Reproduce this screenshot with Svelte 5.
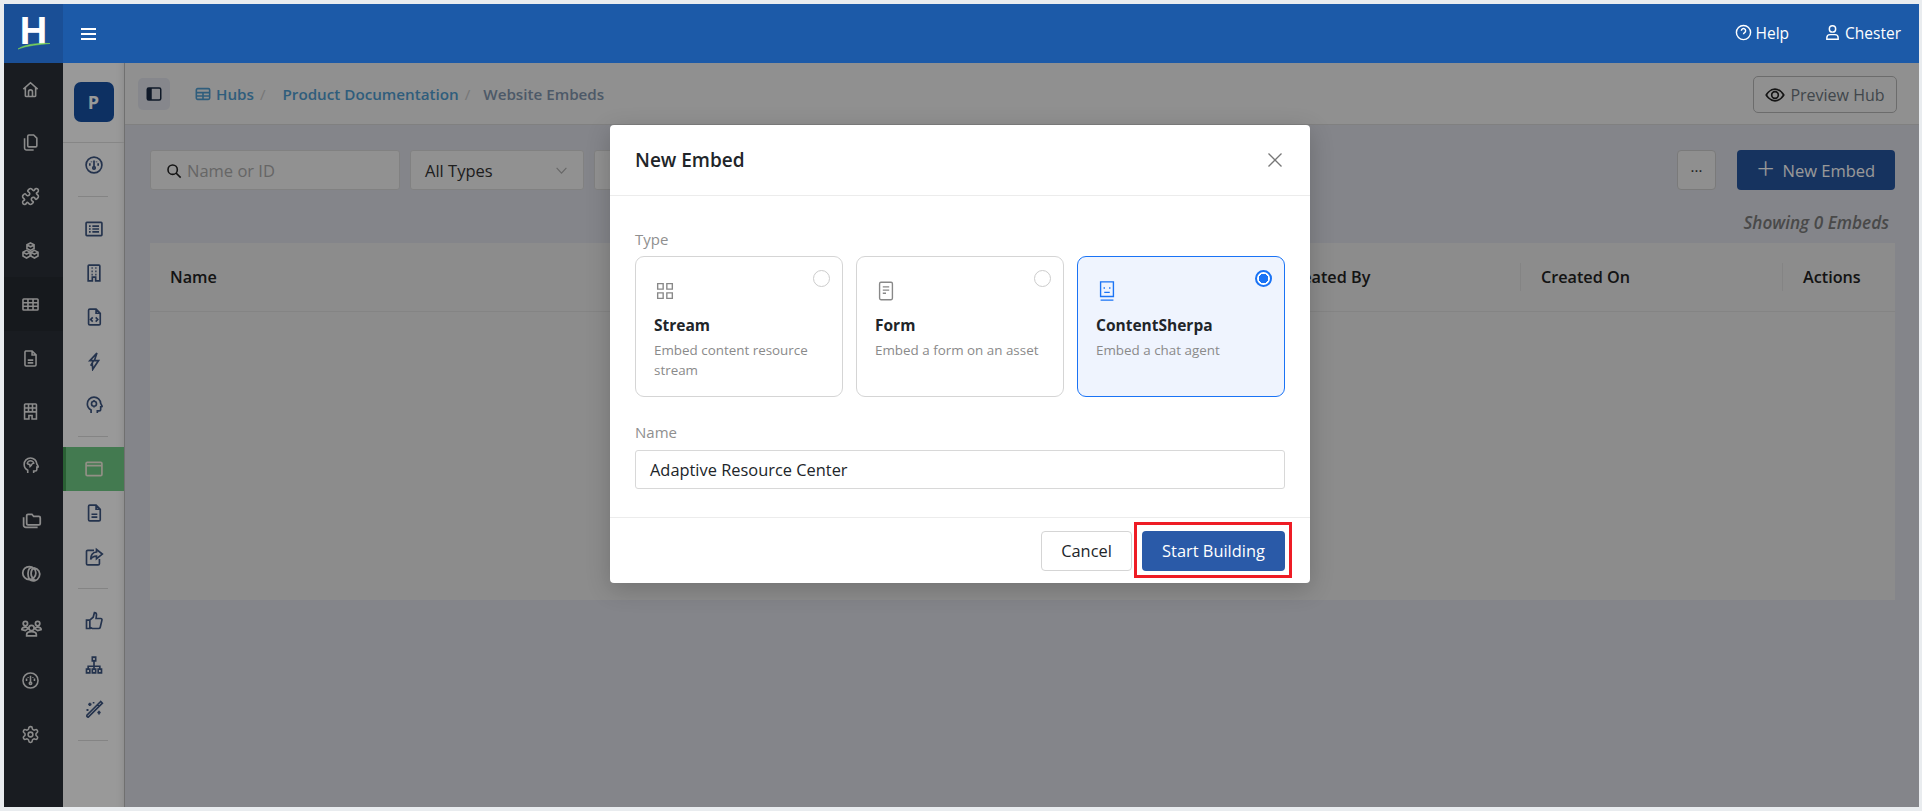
<script>
  const railIcons = [
    { d: 'M3 11.5 12 3.5l9 8M5.5 9.5V20a.8.8 0 0 0 .8.8h11.4a.8.8 0 0 0 .8-.8V9.5M9.5 20.8V15a2.5 2.5 0 0 1 5 0v5.8' },
    { d: 'M10 2.5h6l4 4V16a1.5 1.5 0 0 1-1.5 1.5H10A1.5 1.5 0 0 1 8.5 16V4A1.5 1.5 0 0 1 10 2.500zM4.500 6.500V19A2.500 2.500 0 0 0 7 21.500h9' },
    { d: 'M19.439 7.85c-.049.322.059.648.289.878l1.568 1.568c.47.47.706 1.087.706 1.704s-.235 1.233-.706 1.704l-1.611 1.611a.98.98 0 0 1-.837.276c-.47-.07-.802-.48-.968-.925a2.501 2.501 0 1 0-3.214 3.214c.446.166.855.497.925.968a.979.979 0 0 1-.276.837l-1.61 1.61a2.404 2.404 0 0 1-1.705.707 2.402 2.402 0 0 1-1.704-.706l-1.568-1.568a1.026 1.026 0 0 0-.877-.29c-.493.074-.84.504-1.02.968a2.5 2.5 0 1 1-3.237-3.237c.464-.18.894-.527.967-1.02a1.026 1.026 0 0 0-.289-.877l-1.568-1.568A2.402 2.402 0 0 1 1.998 12c0-.617.236-1.234.706-1.704L4.23 8.77c.24-.24.581-.353.917-.303.515.077.877.528 1.073 1.01a2.5 2.5 0 1 0 3.259-3.259c-.482-.196-.933-.558-1.01-1.073-.05-.336.062-.676.303-.917l1.525-1.525A2.402 2.402 0 0 1 12 1.998c.617 0 1.234.236 1.704.706l1.568 1.568c.23.23.556.338.877.29.493-.074.84-.504 1.02-.968a2.5 2.5 0 1 1 3.237 3.237c-.464.18-.894.527-.967 1.02Z' },
    { d: 'M12 2.500l4.500 2.300v4.700L12 11.800 7.500 9.500V4.800zM7 11.800l4.500 2.300v4.900L7 21.500l-4.500-2.500v-4.900zM17 11.800l4.500 2.300v4.900L17 21.500l-4.500-2.500v-4.900zM7.500 5l4.500 2.300L16.500 5M2.500 14.300 7 16.600l4.500-2.300M12.500 14.300l4.500 2.300 4.500-2.300' },
    { d: 'M3.500 5h17a1 1 0 0 1 1 1v12a1 1 0 0 1-1 1h-17a1 1 0 0 1-1-1V6a1 1 0 0 1 1-1zM2.500 9.700h19M2.500 14.300h19M8.800 5v14M15.200 5v14', active: true },
    { d: 'M6 2.500h8l5 5V20a1.500 1.500 0 0 1-1.500 1.500h-11A1.500 1.500 0 0 1 5 20V4a1.500 1.500 0 0 1 1-1.500zM14 2.500V7.500h5M8.500 14h7M8.500 17.500h7' },
    { d: 'M5.500 2.500h13a1 1 0 0 1 1 1v18h-5.500v-4.500h-4v4.500H4.500v-18a1 1 0 0 1 1-1zM4.500 7.500h15M4.500 12.500h15M9.500 2.500v10M14.500 2.500v10' },
    { d: 'M8.500 21.500V18c-2.600-1.500-4.500-4-4.500-7.300A8 8 0 0 1 12 2.500a8 8 0 0 1 8 7.500l1.700 3.200c.2.500-.1.900-.7.900h-1V17a2 2 0 0 1-2 2h-2v2.500M8 9.500c0-2 2-3.500 4-3.500s4 1.500 4 3.200c-2 0-2.500 1-3 2.500l-1.500 1.500-.5-2.500c-1 0-2.500-.5-3-1.200z' },
    { d: 'M8 6h4.500l2 2.500h6a1.500 1.500 0 0 1 1.500 1.500v6.500a1.500 1.500 0 0 1-1.500 1.500H8a1.500 1.500 0 0 1-1.500-1.500v-9A1.500 1.500 0 0 1 8 6zM3 9.500v9A2.500 2.500 0 0 0 5.500 21H19', wide: true },
    { d: 'M9.500 19a7.500 7.500 0 1 1 0-15 7.500 7.500 0 0 1 0 15zM15 5.500a7.500 7.500 0 1 1-5.500 13.500M14.500 5.800c-4 2.800-4 9.600 0 12.600-4.800 2-6.500-1-6.500-6.300s2-8 6.500-6.300z', wide: true },
    { d: 'M12 9.500a3 3 0 1 1 0 6 3 3 0 0 1 0-6zM6.500 20c0-2.500 2.500-3.300 5.500-3.300s5.500.8 5.500 3.300v1.500h-11zM5 5a2.500 2.500 0 1 1 0 5 2.500 2.500 0 0 1 0-5zM19 5a2.500 2.500 0 1 1 0 5 2.500 2.500 0 0 1 0-5zM1 14.500c0-2 2-3 4-3 1.500 0 2.500.5 3 1.500-.5 1-1 1.500-3 2.500zM23 14.500c0-2-2-3-4-3-1.500 0-2.500.5-3 1.500.5 1 1 1.500 3 2.500z', wide: true },
    { d: 'M12 2.500a9.500 9.500 0 1 1 0 19 9.500 9.500 0 0 1 0-19zM12 6v8M7 9.500v3M17 9.500v3M9 7.500v1M15 7.500v1M12 14a1.500 1.500 0 1 1 0 3 1.500 1.500 0 0 1 0-3z' },
    { d: 'M12.22 2h-.44a2 2 0 0 0-2 2v.18a2 2 0 0 1-1 1.73l-.43.25a2 2 0 0 1-2 0l-.15-.08a2 2 0 0 0-2.73.73l-.22.38a2 2 0 0 0 .73 2.73l.15.1a2 2 0 0 1 1 1.72v.51a2 2 0 0 1-1 1.74l-.15.09a2 2 0 0 0-.73 2.73l.22.38a2 2 0 0 0 2.73.73l.15-.08a2 2 0 0 1 2 0l.43.25a2 2 0 0 1 1 1.73V20a2 2 0 0 0 2 2h.44a2 2 0 0 0 2-2v-.18a2 2 0 0 1 1-1.73l.43-.25a2 2 0 0 1 2 0l.15.08a2 2 0 0 0 2.73-.73l.22-.39a2 2 0 0 0-.73-2.73l-.15-.08a2 2 0 0 1-1-1.74v-.5a2 2 0 0 1 1-1.74l.15-.09a2 2 0 0 0 .73-2.73l-.22-.38a2 2 0 0 0-2.73-.73l-.15.08a2 2 0 0 1-2 0l-.43-.25a2 2 0 0 1-1-1.73V4a2 2 0 0 0-2-2zM12 9a3 3 0 1 1 0 6 3 3 0 0 1 0-6z' }
  ]

  const hubGroups = [
    [{ d: 'M12 2.500a9.500 9.500 0 1 1 0 19 9.500 9.500 0 0 1 0-19zM12 6.500v7M7 10v3M17 10v3M9 7.800v1M15 7.800v1M12 14a1.500 1.500 0 1 1 0 3 1.500 1.500 0 0 1 0-3z' }],
    [
      { d: 'M3.500 4h17a1 1 0 0 1 1 1v14a1 1 0 0 1-1 1h-17a1 1 0 0 1-1-1V5a1 1 0 0 1 1-1zM6 8.500h2M10 8.500h8M6 12h2M10 12h8M6 15.500h2M10 15.500h8' },
      { d: 'M6 2.500h12a1 1 0 0 1 1 1v18h-5v-4.500h-4v4.500H5v-18a1 1 0 0 1 1-1zM9 6h1.500M13.500 6H15M9 10h1.500M13.500 10H15M9 14h1.500M13.500 14H15' },
      { d: 'M7 2.500h7.500l5 5V20a1.500 1.500 0 0 1-1.500 1.500H7A1.500 1.500 0 0 1 5.500 20V4A1.500 1.500 0 0 1 7 2.500zM14.500 2.500v5h5M10.500 12.500 8 15l2.500 2.500M14 12.500l2.500 2.500-2.500 2.500' },
      { d: 'M15.500 2.500 7 11.500h4.500L8 17.500l2-2 .5 6.500 7-10.500h-5l3-9z' },
      { d: 'M8.500 21.500V18C6 16.500 4 14 4 10.700A8 8 0 0 1 12 2.500a8 8 0 0 1 8 7.500l1.700 3.200c.2.500-.1.900-.7.900h-1V17a2 2 0 0 1-2 2h-2v2.500M12 7.500a3 3 0 1 1 0 6 3 3 0 0 1 0-6zM12 6v1.500M12 13.500V15M8.500 10.500H10M14 10.500h1.500' }
    ],
    [
      { d: 'M4 4h16a1.500 1.500 0 0 1 1.500 1.500v13A1.500 1.500 0 0 1 20 20H4a1.500 1.500 0 0 1-1.500-1.500v-13A1.500 1.500 0 0 1 4 4zM2.500 8h19', active: true },
      { d: 'M7 2.500h7.500l5 5V20a1.500 1.500 0 0 1-1.500 1.500H7A1.500 1.500 0 0 1 5.500 20V4A1.500 1.500 0 0 1 7 2.500zM14.500 2.500v5h5M9 13.500h7M9 17h7' },
      { d: 'M12 4H4.500A1.500 1.500 0 0 0 3 5.500V20a1.500 1.500 0 0 0 1.500 1.500H17a1.500 1.500 0 0 0 1.500-1.500v-5.500M15 3l7 5.500-7 5.500v-3c-3.500 0-5.500 1-7 4 0-5 2-8.500 7-9z' }
    ],
    [
      { d: 'M7 11v10H3V11zM7 11l4-3.500 1.500-5.500c1.500 0 2.500 1 2.500 2.500L14.500 9H20a1.500 1.500 0 0 1 1.500 2l-2 8.500A2 2 0 0 1 17.500 21H10l-3-1.500' },
      { d: 'M10 2.500h4v4.500h-4zM3 17h4v4.500H3zM10 17h4v4.500h-4zM17 17h4v4.500h-4zM12 7v10M5 17v-3.500h14V17' },
      { d: 'M20 3 3.500 19.500a1.500 1.500 0 0 0 2 2L22 5zM16.500 6.500l2 2M7 4.500v4M5 6.500h4M4 12v2.500M3 13.200h2.500M18 14v4.500M16 16.200h4M11.500 3.500v2M10.500 4.500h2' }
    ]
  ]

  const cols = ['Name', 'Created By', 'Created On', 'Actions']

  const embedTypes = [
    { title: 'Stream', desc: 'Embed content resource stream', d: 'M4 4h6v6H4zM14 4h6v6h-6zM4 14h6v6H4zM14 14h6v6h-6z' },
    { title: 'Form', desc: 'Embed a form on an asset', d: 'M6.500 2.500h11a1.500 1.500 0 0 1 1.500 1.500v16a1.500 1.500 0 0 1-1.500 1.500h-11A1.500 1.500 0 0 1 5 20V4a1.500 1.500 0 0 1 1.500-1.500zM8.500 7.500h7M8.500 11h7M8.500 14.500h3.500' },
    { title: 'ContentSherpa', desc: 'Embed a chat agent', d: 'M5 2h14v16H5zM5 22h14M9 8v1.500M15 8v1.500M9 13.500h6', selected: true }
  ]
</script>

<div class="frame">
  <header class="topbar">
    <div class="logo">
      <span class="logo-h">H</span>
      <svg class="swoosh" viewBox="0 0 34 8"><path d="M1 7C8 2 22 1 33 1.500 22 2.500 10 3.500 1 7z" fill="#7ed957" stroke="#7ed957" stroke-width=".6"/></svg>
    </div>
    <button class="burger" aria-label="Menu"><span></span><span></span><span></span></button>
    <div class="top-links">
      <span class="top-link">
        <svg viewBox="0 0 24 24" class="top-icon"><circle cx="12" cy="12" r="10"/><path d="M9 9.500a3 3 0 1 1 4.500 2.600c-1 .6-1.500 1.100-1.500 2.200M12 17.500v.3"/></svg>
        Help
      </span>
      <span class="top-link">
        <svg viewBox="0 0 24 24" class="top-icon"><circle cx="12" cy="7" r="4.500"/><path d="M4 21.500v-2c0-2.500 2-4.500 4.500-4.500h7c2.500 0 4.500 2 4.500 4.500v2z"/></svg>
        Chester
      </span>
    </div>
  </header>

  <div class="below">
    <nav class="rail">
      {#each railIcons as icon}
        <div class="rail-item" class:active={icon.active}>
          <svg viewBox="0 0 24 24" class="rail-icon" class:wide={icon.wide}><path d={icon.d}/></svg>
        </div>
      {/each}
    </nav>

    <aside class="hubnav">
      <div class="hub-top"><span class="hub-badge">P</span></div>
      {#each hubGroups as group}
        {#each group as item}
          <div class="hub-item" class:active={item.active}>
            <svg viewBox="0 0 24 24" class="hub-icon"><path d={item.d}/></svg>
          </div>
        {/each}
        <div class="hub-divider"></div>
      {/each}
    </aside>

    <main class="content">
      <div class="crumbbar">
        <button class="panel-toggle" aria-label="Toggle panel">
          <svg viewBox="0 0 24 24"><rect x="3" y="4" width="18" height="16" rx="2" fill="none" stroke="#1a2a44" stroke-width="2"/><path d="M3 6a2 2 0 0 1 2-2h4v16H5a2 2 0 0 1-2-2z" fill="#1a2a44"/></svg>
        </button>
        <svg viewBox="0 0 24 24" class="crumb-icon"><rect x="2" y="4" width="20" height="16" rx="2"/><path d="M2 10h20M2 15h20M12 10v10"/></svg>
        <a class="crumb first" href="#hubs">Hubs</a>
        <span class="slash">/</span>
        <a class="crumb second" href="#doc">Product Documentation</a>
        <span class="slash">/</span>
        <span class="crumb current">Website Embeds</span>
        <button class="preview">
          <svg viewBox="0 0 24 24"><path d="M1.500 12S5.500 5 12 5s10.500 7 10.500 7-4 7-10.500 7S1.500 12 1.500 12z"/><circle cx="12" cy="12" r="4"/></svg>
          Preview Hub
        </button>
      </div>

      <div class="filters">
        <div class="search">
          <svg viewBox="0 0 24 24"><circle cx="10" cy="10" r="7"/><path d="m15 15 7 7"/></svg>
          <span>Name or ID</span>
        </div>
        <div class="select types">All Types <svg viewBox="0 0 24 24"><path d="m3 7 9 10 9-10"/></svg></div>
        <div class="select other"></div>
        <button class="more">···</button>
        <button class="new-btn"><span class="plus">+</span> New Embed</button>
      </div>

      <p class="showing">Showing 0 Embeds</p>

      <section class="table">
        <div class="thead">
          {#each cols as col, i}
            <div class="th" class:divided={i > 0}>{col}</div>
          {/each}
        </div>
      </section>
    </main>

    <div class="backdrop">
      <div class="modal">
        <div class="modal-head">
          <h2>New Embed</h2>
          <svg viewBox="0 0 16 16" class="close"><path d="M1.500 1.500l13 13M14.500 1.500l-13 13"/></svg>
        </div>
        <div class="modal-body">
          <div class="field-label">Type</div>
          <div class="type-grid">
            {#each embedTypes as t}
              <div class="type-card" class:selected={t.selected}>
                <span class="radio"></span>
                <svg viewBox="0 0 24 24" class="type-icon"><path d={t.d}/></svg>
                <div class="type-title">{t.title}</div>
                <div class="type-desc">{t.desc}</div>
              </div>
            {/each}
          </div>
          <div class="field-label name-label">Name</div>
          <div class="name-input">Adaptive Resource Center</div>
        </div>
        <div class="modal-foot">
          <button class="cancel">Cancel</button>
          <div class="start-wrap">
            <button class="start">Start Building</button>
            <span class="callout"></span>
          </div>
        </div>
      </div>
    </div>
  </div>
</div>

<style>
  :global(body) {
    background: #e9ecef;
    font-family: "Open Sans", "Noto Sans", sans-serif;
  }

  .frame {
    height: 811px;
    box-sizing: border-box;
    padding: 4px 3px 4px 4px;
    display: flex;
    flex-direction: column;
    overflow: hidden;
  }

  button {
    font-family: inherit;
    cursor: pointer;
  }

  .topbar {
    height: 59px;
    flex: none;
    background: #1c5aa8;
    display: flex;
    align-items: center;
    color: #fff;
  }

  .logo {
    width: 59px;
    height: 59px;
    background: #1a4f96;
    position: relative;
    display: flex;
    justify-content: center;
  }

  .logo-h {
    font: 700 38px/1 "Liberation Sans", sans-serif;
    margin-top: 8px;
  }

  .swoosh {
    position: absolute;
    left: 13px;
    top: 38px;
    width: 34px;
    height: 8px;
  }

  .burger {
    background: none;
    border: 0;
    margin-left: 18px;
    padding: 0;
    display: flex;
    flex-direction: column;
    gap: 3px;
    width: 15px;
  }

  .burger span {
    display: block;
    height: 2px;
    background: #fff;
  }

  .top-links {
    margin-left: auto;
    display: flex;
    gap: 35px;
    padding-right: 18px;
    margin-top: -2px;
  }

  .top-link {
    display: flex;
    align-items: center;
    gap: 4px;
    font-size: 15.500px;
  }

  .top-icon {
    width: 17px;
    height: 17px;
    fill: none;
    stroke: #fff;
    stroke-width: 2;
  }

  .below {
    flex: 1;
    display: flex;
    position: relative;
    min-height: 0;
  }

  .rail {
    width: 59px;
    flex: none;
    background: #2a2f37;
  }

  .rail-item {
    height: 53.800px;
    display: flex;
    align-items: center;
    padding-left: 17px;
  }

  .rail-item:first-child {
    height: 53px;
  }

  .rail-item.active {
    background: #262a31;
  }

  .rail-icon {
    width: 19px;
    height: 19px;
    fill: none;
    stroke: #e8e8e8;
    stroke-width: 2;
  }

  .rail-icon.wide {
    width: 21px;
    height: 21px;
  }

  .hubnav {
    width: 61px;
    flex: none;
    background: #fff;
    border-right: 1px solid #bbb;
    box-shadow: inset -8px 0 8px -8px rgba(0, 0, 0, .12);
  }

  .hub-top {
    height: 80px;
    box-sizing: border-box;
    padding-bottom: 2px;
    border-bottom: 1px solid #e0e0e0;
    display: flex;
    align-items: center;
    justify-content: center;
  }

  .hub-badge {
    width: 40px;
    height: 40px;
    border-radius: 7px;
    background: #1750a3;
    color: #fff;
    font-weight: 700;
    font-size: 18px;
    display: flex;
    align-items: center;
    justify-content: center;
  }

  .hub-item {
    height: 44px;
    display: flex;
    align-items: center;
    justify-content: center;
  }

  .hub-item.active {
    background: #71cb85;
    box-shadow: inset 3px 0 0 #46a058;
  }

  .hub-icon {
    width: 20px;
    height: 20px;
    fill: none;
    stroke: #3d5580;
    stroke-width: 2;
  }

  .hub-item.active .hub-icon {
    stroke: #f5f0e0;
  }

  .hub-divider {
    height: 1px;
    background: #ddd;
    margin: 9px 16px 10px 15px;
  }

  .content {
    flex: 1;
    min-width: 0;
    background: #dcdee6;
    display: flex;
    flex-direction: column;
  }

  .crumbbar {
    height: 60px;
    flex: none;
    padding: 1px 22px 0 13px;
    background: #f0f0f0;
    border-bottom: 1px solid #d5d5d5;
    display: flex;
    align-items: center;
    font-size: 15.200px;
    font-weight: 600;
  }

  .panel-toggle {
    width: 32px;
    height: 32px;
    border: 0;
    border-radius: 5px;
    background: #dfe2ea;
    padding: 7px;
    margin-right: 25px;
    display: flex;
  }

  .panel-toggle svg {
    width: 18px;
    height: 18px;
  }

  .crumb-icon {
    width: 16px;
    height: 16px;
    fill: none;
    stroke: #4f9ccf;
    stroke-width: 2.400;
    margin-right: 5px;
  }

  .crumb {
    text-decoration: none;
  }

  .first,
  .second {
    color: #4f9ccf;
  }

  .current {
    color: #8095ad;
    margin-left: 2px;
  }

  .slash {
    color: #c6c6c6;
    font-weight: 400;
    margin: 0 11px 0 6px;
  }

  .second {
    margin-left: 6px;
  }

  .preview {
    margin-left: auto;
    margin-top: 1px;
    width: 144px;
    height: 37px;
    background: none;
    border: 1px solid #b5b5b5;
    border-radius: 5px;
    color: #6c757d;
    font-size: 16px;
    display: flex;
    align-items: center;
    justify-content: center;
    gap: 5px;
  }

  .preview svg {
    width: 20px;
    height: 20px;
    fill: none;
    stroke: #222;
    stroke-width: 2;
  }

  .filters {
    display: flex;
    gap: 10px;
    margin: 25px 24px 0 25px;
    height: 40px;
  }

  .search,
  .select {
    background: #f2f2f2;
    border: 1px solid #d8d8d8;
    border-radius: 3px;
    box-sizing: border-box;
    display: flex;
    align-items: center;
    font-size: 16.500px;
  }

  .search {
    width: 250px;
    padding: 1px 0 0 15px;
    gap: 5px;
    color: #aaa;
  }

  .search svg {
    width: 16px;
    height: 16px;
    fill: none;
    stroke: #222;
    stroke-width: 2.400;
  }

  .select {
    width: 174px;
    padding: 1px 15px 0 14px;
    justify-content: space-between;
    color: #333;
  }

  .select svg {
    width: 13px;
    height: 13px;
    fill: none;
    stroke: #aaa;
    stroke-width: 2;
  }

  .other {
    width: 200px;
  }

  .more {
    margin-left: auto;
    margin-right: 1px;
    width: 39px;
    background: #eee;
    border: 1px solid #ccc;
    border-radius: 4px;
    color: #333;
    font-size: 15px;
    padding: 0;
  }

  .new-btn {
    width: 158px;
    background: #26559e;
    border: 0;
    border-radius: 4px;
    color: #fff;
    font-size: 16.500px;
    padding: 0;
    margin-left: 10px;
    display: flex;
    align-items: center;
    justify-content: center;
    gap: 8px;
  }

  .plus {
    font-size: 31px;
    line-height: 1;
    font-weight: 300;
    margin-top: -4px;
  }

  .showing {
    margin: 0 30px 0 0;
    height: 53px;
    line-height: 66px;
    text-align: right;
    font-size: 17.200px;
    font-weight: 600;
    font-style: italic;
    color: #7a7a7a;
  }

  .table {
    margin: 0 24px 0 25px;
    height: 357px;
    background: #e9e9e9;
  }

  .thead {
    height: 68px;
    border-bottom: 1px solid #ddd;
    display: grid;
    grid-template-columns: 1fr 256px 262px 113px;
    align-items: center;
  }

  .th {
    padding-left: 20px;
    height: 28px;
    line-height: 28px;
    font-size: 16.200px;
    font-weight: 600;
    color: #222;
  }

  .divided {
    border-left: 1px solid #ddd;
  }

  .backdrop {
    position: absolute;
    inset: 0;
    padding-right: 3px;
    background: rgba(0, 0, 0, .4);
    display: flex;
    justify-content: center;
    align-items: flex-start;
  }

  .modal {
    width: 700px;
    margin-top: 62px;
    background: #fff;
    border-radius: 4px;
    box-shadow: 0 6px 24px rgba(0, 0, 0, .2);
  }

  .modal-head {
    height: 70px;
    border-bottom: 1px solid #ececec;
    display: flex;
    align-items: center;
    justify-content: space-between;
    padding: 0 27px 0 25px;
  }

  h2 {
    margin: 0;
    font-size: 19px;
    font-weight: 600;
    color: #212529;
  }

  .close {
    width: 16px;
    height: 16px;
    fill: none;
    stroke: #777;
    stroke-width: 1.300;
  }

  .modal-body {
    padding: 33px 25px 28px;
  }

  .field-label {
    font-size: 15px;
    line-height: 20px;
    margin-bottom: 7px;
    color: #8f8f8f;
  }

  .name-label {
    font-weight: 500;
    margin-top: 25px;
    margin-bottom: 8px;
  }

  .type-grid {
    display: grid;
    grid-template-columns: repeat(3, 1fr);
    gap: 13px;
  }

  .type-card {
    position: relative;
    height: 141px;
    box-sizing: border-box;
    border: 1px solid #d5d5d5;
    border-radius: 9px;
    padding: 23px 18px 0;
  }

  .type-card.selected {
    background: #eff4fe;
    border-color: #1a73f5;
  }

  .radio {
    position: absolute;
    top: 13px;
    right: 12px;
    width: 17px;
    height: 17px;
    box-sizing: border-box;
    border: 1px solid #ccc;
    border-radius: 50%;
    background: #fff;
  }

  .selected .radio {
    border: 2px solid #1a73f5;
    background: radial-gradient(circle, #1a73f5 0 4.500px, #fff 5px);
  }

  .type-icon {
    display: block;
    width: 22px;
    height: 22px;
    fill: none;
    stroke: #888;
    stroke-width: 1.500;
  }

  .selected .type-icon {
    stroke: #1a73f5;
  }

  .type-title {
    margin-top: 12px;
    font-size: 15.500px;
    line-height: 22px;
    font-weight: 700;
    color: #212529;
  }

  .type-desc {
    margin-top: 5px;
    font-size: 13.400px;
    line-height: 19.500px;
    color: #8a8a8a;
  }

  .name-input {
    height: 39px;
    box-sizing: border-box;
    border: 1px solid #d8d8d8;
    border-radius: 3px;
    padding-left: 14px;
    display: flex;
    align-items: center;
    font-size: 16.400px;
    color: #212529;
  }

  .modal-foot {
    height: 66px;
    box-sizing: border-box;
    border-top: 1px solid #ececec;
    display: flex;
    justify-content: flex-end;
    align-items: center;
    gap: 10px;
    padding: 0 25px;
  }

  .cancel {
    width: 91px;
    height: 40px;
    background: #fff;
    border: 1px solid #d5d5d5;
    border-radius: 4px;
    color: #212529;
    font-size: 16.400px;
    padding: 0;
  }

  .start-wrap {
    position: relative;
    display: flex;
  }

  .start {
    width: 143px;
    height: 40px;
    background: #2a5aa8;
    border: 0;
    border-radius: 4px;
    color: #fff;
    font-size: 16.400px;
    padding: 0;
  }

  .callout {
    position: absolute;
    inset: -9px -7px -7px -8px;
    border: 3px solid #ee1c25;
    pointer-events: none;
  }
</style>
